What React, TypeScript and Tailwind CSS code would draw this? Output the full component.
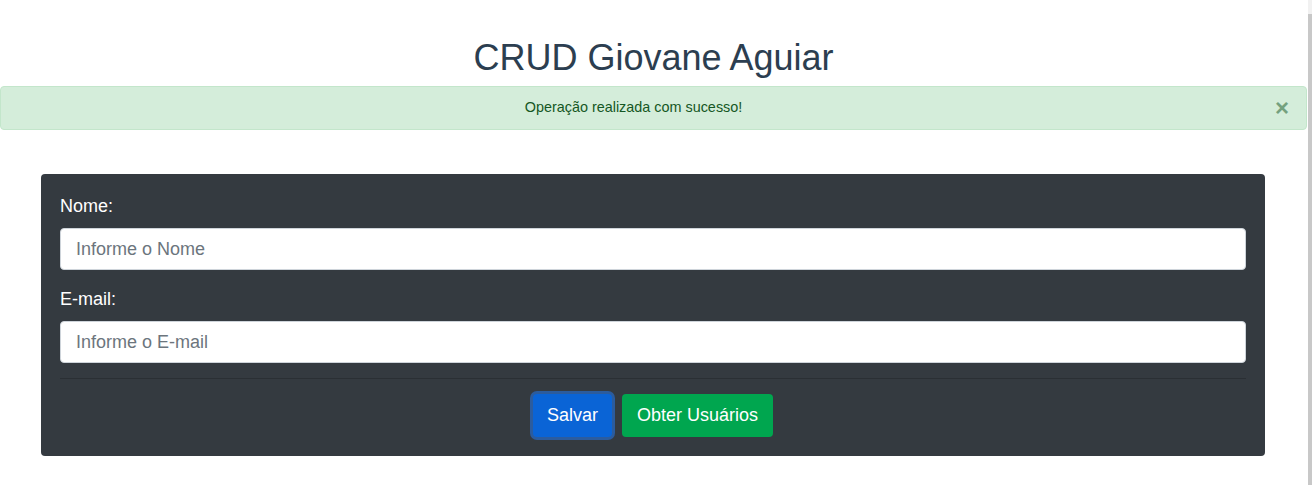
export default function App() {
  return (
    <div className="flex min-h-[485px] w-full bg-white font-['Liberation_Sans',Arial,sans-serif]">
      <div className="flex-1 pr-px">
        {/* Title */}
        <h1 className="pt-[36px] mb-[7px] text-center text-[36px] leading-[43px] font-normal text-[#2c3e50]">
          CRUD Giovane Aguiar
        </h1>

        {/* Alert */}
        <div className="relative flex h-[44px] items-center rounded border border-[#c3e6cb] bg-[#d4edda] pl-5 pr-[60px] text-[#155724]">
          <p className="flex-1 text-center text-[14.4px]">Operação realizada com sucesso!</p>
          <button className="absolute right-[17px] top-[9px] text-[24px] leading-[24px] font-bold text-[#155724] opacity-50">
            ×
          </button>
        </div>

        {/* Form card */}
        <div className="ml-[41px] mr-[42px] mt-[44px] rounded bg-[#343a40] px-[19px] pt-[19px] pb-[19px]">
          <div className="mb-4">
            <label className="mb-2 block text-[18px] leading-[27px] text-white">Nome:</label>
            <input
              type="text"
              placeholder="Informe o Nome"
              className="h-[42px] w-full rounded border border-[#ced4da] bg-white px-[15px] text-[18px] text-[#495057] placeholder:text-[#6c757d] outline-none"
            />
          </div>
          <div>
            <label className="mb-2 block text-[18px] leading-[27px] text-white">E-mail:</label>
            <input
              type="text"
              placeholder="Informe o E-mail"
              className="h-[42px] w-full rounded border border-[#ced4da] bg-white px-[15px] text-[18px] text-[#495057] placeholder:text-[#6c757d] outline-none"
            />
          </div>
          <hr className="my-[15px] border-t border-[#2a2f34]" />
          <div className="flex justify-center gap-[10px]">
            <button className="h-[43px] rounded bg-[#0a64d6] px-[14px] text-[18px] text-white shadow-[0_0_0_3px_#2b5c9e]">
              Salvar
            </button>
            <button className="h-[43px] rounded bg-[#00a64f] px-[15px] text-[18px] text-white">
              Obter Usuários
            </button>
          </div>
        </div>
      </div>

      {/* Scrollbar */}
      <div className="flex w-[4px] flex-col">
        <div className="h-[14px] bg-[#f1f1f1]" />
        <div className="flex-1 bg-[#c8c8c8]" />
      </div>
    </div>
  );
}
